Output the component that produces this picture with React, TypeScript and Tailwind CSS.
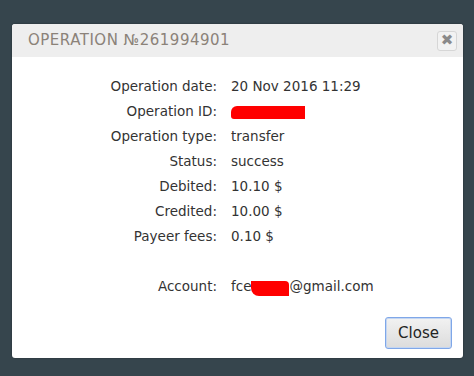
const rows: [string, React.ReactNode][] = [
  ['Operation date:', '20 Nov 2016 11:29'],
  ['Operation ID:', <span className="inline-block h-[13px] w-[74px] bg-[#ff0000] rounded-tl-[6px] rounded-bl-[3px] align-middle" />],
  ['Operation type:', 'transfer'],
  ['Status:', 'success'],
  ['Debited:', '10.10 $'],
  ['Credited:', '10.00 $'],
  ['Payeer fees:', '0.10 $'],
];

function App() {
  return (
    <div className="w-[474px] h-[376px] bg-[#36454d] pt-[24px] pl-[12px] overflow-hidden">
      <div className="w-[451px] h-[334px] bg-white rounded-[3px] flex flex-col overflow-hidden shadow-[0_0_2px_rgba(0,0,0,0.4)]">
        {/* Header */}
        <div className="h-[33px] bg-[#eeeeee] flex items-center justify-between pl-[16px] pr-[6px]">
          <span className="text-[15px] tracking-[0.5px] text-[#8b8279] font-['DejaVu_Sans',sans-serif]">
            OPERATION №261994901
          </span>
          <button className="w-[20px] h-[20px] border border-[#d6d6d6] rounded-[3px] bg-[#f2f2f2] flex items-center justify-center text-[#8a8a8a] text-[15px] font-bold leading-none font-['DejaVu_Sans',sans-serif]">
            ✖
          </button>
        </div>

        {/* Body */}
        <div className="flex-1 pt-[17px] font-['DejaVu_Sans',sans-serif] text-[13.5px] text-[#333]">
          {rows.map(([label, value]) => (
            <div key={label} className="flex h-[25px] items-center">
              <div className="w-[205px] text-right">{label}</div>
              <div className="pl-[14px]">{value}</div>
            </div>
          ))}
          <div className="h-[25px]" />
          <div className="flex h-[25px] items-center">
            <div className="w-[205px] text-right">Account:</div>
            <div className="pl-[14px] flex items-center">
              fce
              <span className="inline-block h-[15px] w-[38px] bg-[#ff0000] rounded-bl-[8px] rounded-tr-[4px] mt-[3px]" />
              @gmail.com
            </div>
          </div>
        </div>

        {/* Footer */}
        <div className="flex justify-end pr-[11px] pb-[9px]">
          <button className="w-[67px] h-[32px] rounded-[3px] border border-[#7fa7e8] bg-gradient-to-b from-[#f2f2f2] to-[#dcdcdc] text-[15px] text-[#222] font-['DejaVu_Sans',sans-serif] shadow-[inset_0_0_0_1px_#c4d6f2]">
            Close
          </button>
        </div>
      </div>
    </div>
  );
}

export default App;
